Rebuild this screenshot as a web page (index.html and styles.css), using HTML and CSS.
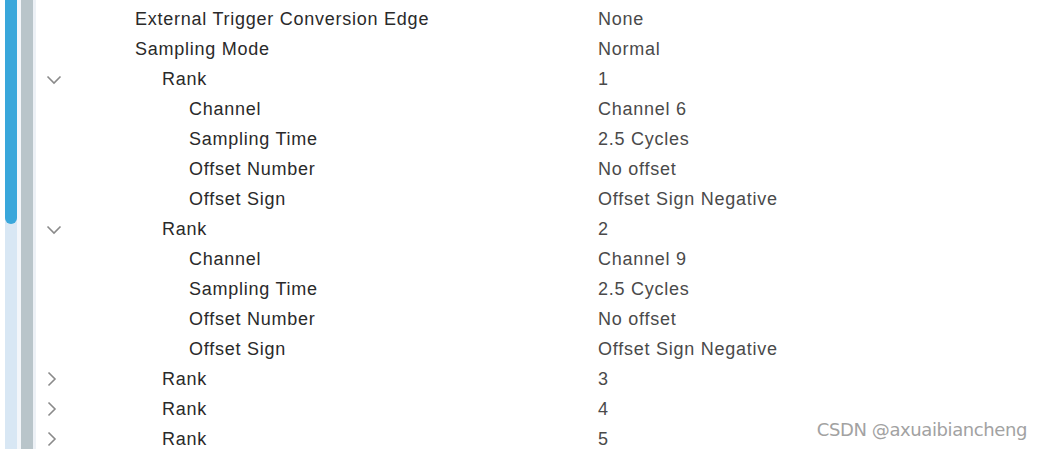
FILE: index.html
```html
<!DOCTYPE html>
<html>
<head>
<meta charset="utf-8">
<link rel="stylesheet" href="styles.css">
</head>
<body>
<div class="page">
  <div class="rail">
    <div class="scroll"><div class="thumb"></div></div>
    <div class="gap"></div>
    <div class="gutter"></div>
    <div class="edge"></div>
  </div>
  <div class="tree">
    <div class="row"><div class="tog"></div><div class="name l0">External Trigger Conversion Edge</div><div class="val">None</div></div>
    <div class="row"><div class="tog"></div><div class="name l0">Sampling Mode</div><div class="val">Normal</div></div>
    <div class="row"><div class="tog"><svg class="chev down" width="16" height="10" viewBox="0 0 16 10"><polyline points="1.5,1.5 8,8 14.5,1.5"/></svg></div><div class="name l1">Rank</div><div class="val">1</div></div>
    <div class="row"><div class="tog"></div><div class="name l2">Channel</div><div class="val">Channel 6</div></div>
    <div class="row"><div class="tog"></div><div class="name l2">Sampling Time</div><div class="val">2.5 Cycles</div></div>
    <div class="row"><div class="tog"></div><div class="name l2">Offset Number</div><div class="val">No offset</div></div>
    <div class="row"><div class="tog"></div><div class="name l2">Offset Sign</div><div class="val">Offset Sign Negative</div></div>
    <div class="row"><div class="tog"><svg class="chev down" width="16" height="10" viewBox="0 0 16 10"><polyline points="1.5,1.5 8,8 14.5,1.5"/></svg></div><div class="name l1">Rank</div><div class="val">2</div></div>
    <div class="row"><div class="tog"></div><div class="name l2">Channel</div><div class="val">Channel 9</div></div>
    <div class="row"><div class="tog"></div><div class="name l2">Sampling Time</div><div class="val">2.5 Cycles</div></div>
    <div class="row"><div class="tog"></div><div class="name l2">Offset Number</div><div class="val">No offset</div></div>
    <div class="row"><div class="tog"></div><div class="name l2">Offset Sign</div><div class="val">Offset Sign Negative</div></div>
    <div class="row"><div class="tog"><svg class="chev right" width="10" height="16" viewBox="0 0 10 16"><polyline points="1.5,1.5 8,8 1.5,14.5"/></svg></div><div class="name l1">Rank</div><div class="val">3</div></div>
    <div class="row"><div class="tog"><svg class="chev right" width="10" height="16" viewBox="0 0 10 16"><polyline points="1.5,1.5 8,8 1.5,14.5"/></svg></div><div class="name l1">Rank</div><div class="val">4</div></div>
    <div class="row"><div class="tog"><svg class="chev right" width="10" height="16" viewBox="0 0 10 16"><polyline points="1.5,1.5 8,8 1.5,14.5"/></svg></div><div class="name l1">Rank</div><div class="val">5</div></div>
  </div>
  <div class="watermark">CSDN @axuaibiancheng</div>
</div>
</body>
</html>
```
FILE: styles.css
```css
html, body {
  margin: 0;
  padding: 0;
  background: #ffffff;
  overflow: hidden;
}
.page {
  position: relative;
  display: flex;
  width: 1042px;
  height: 449px;
  font-family: "Liberation Sans", Arial, sans-serif;
  font-size: 18px;
  letter-spacing: 0.75px;
  color: #2a2a2a;
}
.rail {
  display: flex;
  height: 449px;
  flex: 0 0 36px;
  padding-left: 5px;
  box-sizing: border-box;
}
.scroll {
  width: 12px;
  height: 100%;
  background: #d8e7f4;
}
.thumb {
  width: 12px;
  height: 224px;
  background: #39a7db;
  border-radius: 0 0 6px 6px;
}
.gap {
  width: 4px;
  background: #f3f6fa;
}
.gutter {
  width: 12px;
  background: #b9c5ca;
}
.edge {
  width: 3px;
  background: #edf1f6;
}
.tree {
  display: flex;
  flex-direction: column;
  padding-top: 4px;
  flex: 1;
}
.row {
  display: flex;
  align-items: center;
  height: 30px;
  white-space: nowrap;
}
.tog {
  flex: 0 0 99px;
  display: flex;
  align-items: center;
  height: 30px;
}
.name {
  flex: 0 0 463px;
  box-sizing: border-box;
}
.l1 { padding-left: 27px; }
.l2 { padding-left: 54px; }
.val {
  color: #4a4a4a;
}
.chev polyline {
  fill: none;
  stroke: #8a8a8a;
  stroke-width: 1.6;
}
.chev.down { margin-left: 10px; margin-top: 1px; }
.chev.right { margin-left: 11px; }
.watermark {
  position: absolute;
  right: 15px;
  bottom: 9px;
  font-family: "DejaVu Sans", sans-serif;
  font-size: 18px;
  color: #a2a2a2;
  letter-spacing: -0.4px;
}
```
